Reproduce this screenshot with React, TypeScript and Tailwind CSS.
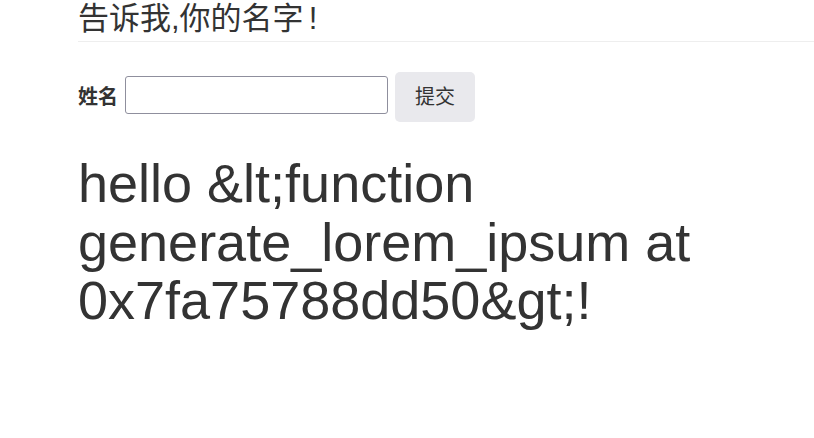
export default function App() {
  return (
    <div className="min-h-screen bg-white pl-[78px] text-[#333] font-['Liberation_Sans','Noto_Sans_CJK_SC',sans-serif]">
      {/* page header */}
      <div className="border-b border-[#eee] pb-[4px]">
        <h1 className="text-[31px] leading-[37px]">
          告诉我,你的名字<span className="pl-[5px]">!</span>
        </h1>
      </div>

      {/* form */}
      <form className="mt-[30px] flex items-center" onSubmit={(e) => e.preventDefault()}>
        <label htmlFor="name" className="text-[20px] font-bold leading-none">
          姓名
        </label>
        <input
          id="name"
          type="text"
          className="ml-[7px] mb-[4px] h-[38px] w-[263px] rounded-[3px] border border-[#8f8f9d] bg-white px-2"
        />
        <button
          type="submit"
          className="ml-[7px] h-[50px] w-[80px] rounded-[5px] bg-[#e9e9ed] text-[20px]"
        >
          提交
        </button>
      </form>

      {/* greeting */}
      <h1 className="mt-[32px] max-w-[700px] text-[54px] leading-[58.5px]">
        hello &amp;lt;function generate_lorem_ipsum at 0x7fa75788dd50&amp;gt;!
      </h1>
    </div>
  )
}
